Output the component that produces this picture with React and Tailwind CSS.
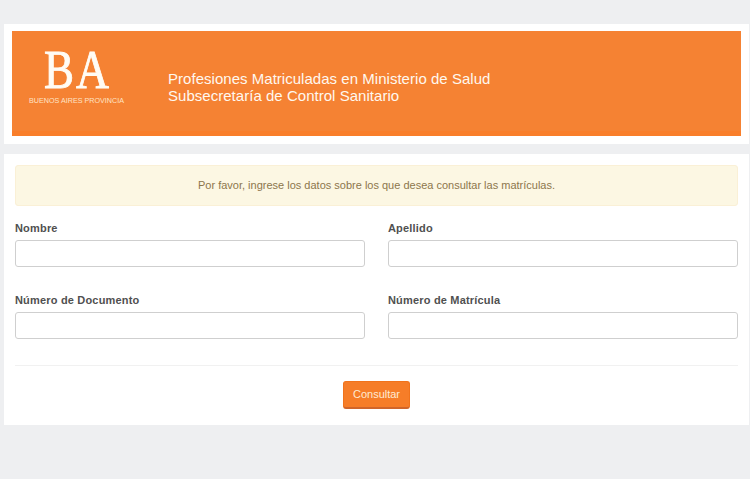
function Logo() {
  return (
    <svg className="-mt-[12px] block h-[76px] w-[112px] overflow-visible" viewBox="0 -12 112 76" fill="#fffcf5" role="img" aria-label="Buenos Aires Provincia">
      <g fontSize="54" stroke="#fffcf5" strokeWidth="0.9" fontFamily="Liberation Serif, serif">
        <text x="24" y="40.5" textLength="30" lengthAdjust="spacingAndGlyphs">B</text>
        <text x="56" y="40.5" textLength="33" lengthAdjust="spacingAndGlyphs">A</text>
      </g>
      <text x="9" y="56" fontSize="6.7" fill="#ffe2c6" textLength="95" lengthAdjust="spacingAndGlyphs" fontFamily="Liberation Sans, sans-serif">BUENOS AIRES PROVINCIA</text>
    </svg>
  );
}

function Field({ id, label }) {
  return (
    <div>
      <label htmlFor={id} className="-mt-px block h-4 text-[11px] leading-4 font-bold tracking-[0.18px] text-[#505050]">{label}</label>
      <input id={id} type="text" className="mt-1 block h-[27px] w-full rounded-[3px] border border-[#cfcfcf] bg-white px-2 text-[11px] outline-none" />
    </div>
  );
}

export default function App() {
  return (
    <div className="h-[479px] overflow-hidden bg-[#eeeff1] pt-[24px] pr-px pl-[4px] font-['Liberation_Sans',Arial,sans-serif]">
      <header className="h-[120px] bg-white pt-[7px] pr-[8px] pl-[8px]">
        <div className="flex h-[105px] border-b-[5px] border-[#f97e2a] bg-[#f58233] pt-[16px] pl-[8px]">
          <Logo />
          <h1 className="mt-[24px] ml-[36px] text-[15px] leading-[16.5px] tracking-[0.03px] whitespace-nowrap text-[#fff8ef]">
            Profesiones Matriculadas en Ministerio de Salud
            <br />
            Subsecretaría de Control Sanitario
          </h1>
        </div>
      </header>
      <main className="mt-[10px] h-[271px] bg-white px-[11px] pt-[11px]">
        <div className="flex h-[41px] items-center justify-center rounded-[3px] border border-[#faf0d6] bg-[#fcf7e3] text-[11px] text-[#8c764c]">
          Por favor, ingrese los datos sobre los que desea consultar las matrículas.
        </div>
        <form>
          <div className="mt-[15px] grid grid-cols-2 gap-x-[23px] gap-y-[26px]">
            <Field id="nombre" label="Nombre" />
            <Field id="apellido" label="Apellido" />
            <Field id="documento" label="Número de Documento" />
            <Field id="matricula" label="Número de Matrícula" />
          </div>
          <hr className="mt-[26px] border-[#f1f1f1]" />
          <div className="mt-[15px] flex justify-center">
            <button type="button" className="h-[28px] w-[67px] rounded-[3px] border border-b-2 border-[#f0731c] border-b-[#d0652a] bg-[#f67d28] text-[11px] text-[#ffead2]">
              Consultar
            </button>
          </div>
        </form>
      </main>
    </div>
  );
}
